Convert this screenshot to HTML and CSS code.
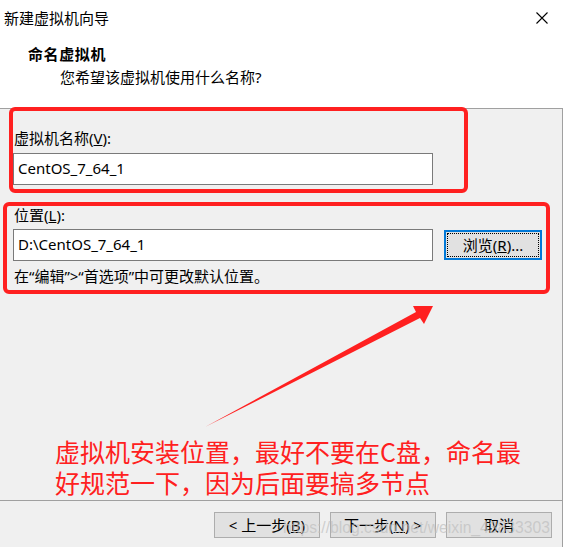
FILE: index.html
```html
<!DOCTYPE html>
<html lang="zh-CN">
<head>
<meta charset="utf-8">
<title>新建虚拟机向导</title>
<link rel="stylesheet" href="styles.css">
</head>
<body>
<div class="window">
  <div class="header">
    <div class="titlebar">
      <span class="title">新建虚拟机向导</span>
      <svg class="close" width="12" height="12" viewBox="0 0 12 12"><path d="M0.5 0.5 L11.5 11.5 M11.5 0.5 L0.5 11.5" stroke="#000" stroke-width="1.1" fill="none"/></svg>
    </div>
    <div class="head-title">命名虚拟机</div>
    <div class="head-sub">您希望该虚拟机使用什么名称?</div>
  </div>
  <div class="body">
    <div class="label">虚拟机名称(<u>V</u>):</div>
    <div class="input">CentOS_7_64_1</div>
    <div class="label loc-label">位置(<u>L</u>):</div>
    <div class="loc-row">
      <div class="input">D:\CentOS_7_64_1</div>
      <div class="btn browse"><span class="focus">浏览(<u>R</u>)...</span></div>
    </div>
    <div class="label hint">在“编辑”&gt;“首选项”中可更改默认位置。</div>
    <div class="note">虚拟机安装位置，最好不要在C盘，命名最<br>好规范一下，因为后面要搞多节点</div>
  </div>
  <div class="footer">
    <div class="btn">&lt; 上一步(<u>B</u>)</div>
    <div class="btn">下一步(<u>N</u>) &gt;</div>
    <div class="btn">取消</div>
  </div>
  <div class="annot">
    <div class="redbox box1"></div>
    <div class="redbox box2"></div>
    <svg class="arrow" width="565" height="548" viewBox="0 0 565 548">
      <polygon points="205,427 416,312 413,306 433,306 424,324 420,318" fill="#ff2020"/>
    </svg>
    <div class="watermark">https://blog.csdn.net/weixin_43833303</div>
  </div>
</div>
</body>
</html>
```
FILE: styles.css
```css
html, body {
  margin: 0;
  padding: 0;
  background: #ffffff;
}
body {
  width: 565px;
  height: 548px;
  overflow: hidden;
  font-family: "Noto Sans", "Noto Sans CJK SC", sans-serif;
  font-size: 15px;
  color: #000;
}
.window {
  position: relative;
  width: 563px;
  height: 548px;
}
.header {
  height: 108px;
  background: #fff;
  border-bottom: 1px solid #a0a0a0;
}
.titlebar {
  height: 36px;
  display: flex;
  align-items: center;
  justify-content: space-between;
  padding-left: 4px;
  padding-right: 15px;
}
.title {
  font-size: 15px;
  line-height: 36px;
}
.close {
  display: block;
  margin-top: -1px;
}
.head-title {
  margin-top: 8px;
  margin-left: 28px;
  font-weight: bold;
  letter-spacing: 0.6px;
  line-height: 20px;
  height: 20px;
}
.head-sub {
  margin-top: 3px;
  margin-left: 60px;
  line-height: 20px;
  height: 20px;
}
.body {
  height: 391px;
  background: #f0f0f0;
  border-right: 1px solid #a0a0a0;
  padding-top: 19px;
  padding-left: 13px;
  box-sizing: border-box;
}
.label {
  line-height: 20px;
  height: 20px;
  padding-left: 1px;
}
.input {
  width: 420px;
  height: 32px;
  box-sizing: border-box;
  border: 1px solid #7a7a7a;
  background: #fff;
  padding-left: 4px;
  line-height: 28px;
  margin-top: 5px;
}
.loc-label {
  margin-top: 20px;
}
.loc-row {
  display: flex;
  align-items: center;
  margin-top: 4px;
}
.loc-row .input {
  margin-top: 0;
}
.btn {
  width: 106px;
  height: 26px;
  box-sizing: border-box;
  border: 1px solid #adadad;
  background: #e1e1e1;
  text-align: center;
  line-height: 24px;
}
.browse {
  width: 98px;
  height: 30px;
  margin-left: 11px;
  border: 2px solid #0078d7;
  padding: 1px;
}
.browse .focus {
  display: block;
  height: 100%;
  box-sizing: border-box;
  border: 1px dotted #000;
  line-height: 22px;
}
.hint {
  margin-top: 5px;
}
.note {
  margin-top: 150px;
  margin-left: 42px;
  font-family: "Noto Sans CJK SC", sans-serif;
  font-size: 25px;
  line-height: 31px;
  color: #ff2020;
}
.footer {
  height: 47px;
  box-sizing: border-box;
  background: #f0f0f0;
  border-top: 1px solid #a0a0a0;
  border-right: 1px solid #a0a0a0;
  padding-top: 11px;
  padding-right: 10px;
  display: flex;
  justify-content: flex-end;
  align-items: flex-start;
  gap: 10px;
}
.annot {
  position: absolute;
  left: 0;
  top: 0;
  width: 565px;
  height: 548px;
  pointer-events: none;
}
.redbox {
  position: absolute;
  box-sizing: border-box;
  border: 4px solid #ff2020;
  border-radius: 6px;
}
.box1 {
  left: 9px;
  top: 107px;
  width: 459px;
  height: 86px;
}
.box2 {
  left: 3px;
  top: 202px;
  width: 547px;
  height: 92px;
}
.arrow {
  position: absolute;
  left: 0;
  top: 0;
}
.watermark {
  position: absolute;
  left: 283px;
  top: 518px;
  font-family: "Liberation Sans", sans-serif;
  font-size: 15.7px;
  line-height: 20px;
  color: rgba(190, 190, 190, 0.7);
  white-space: nowrap;
}
```
